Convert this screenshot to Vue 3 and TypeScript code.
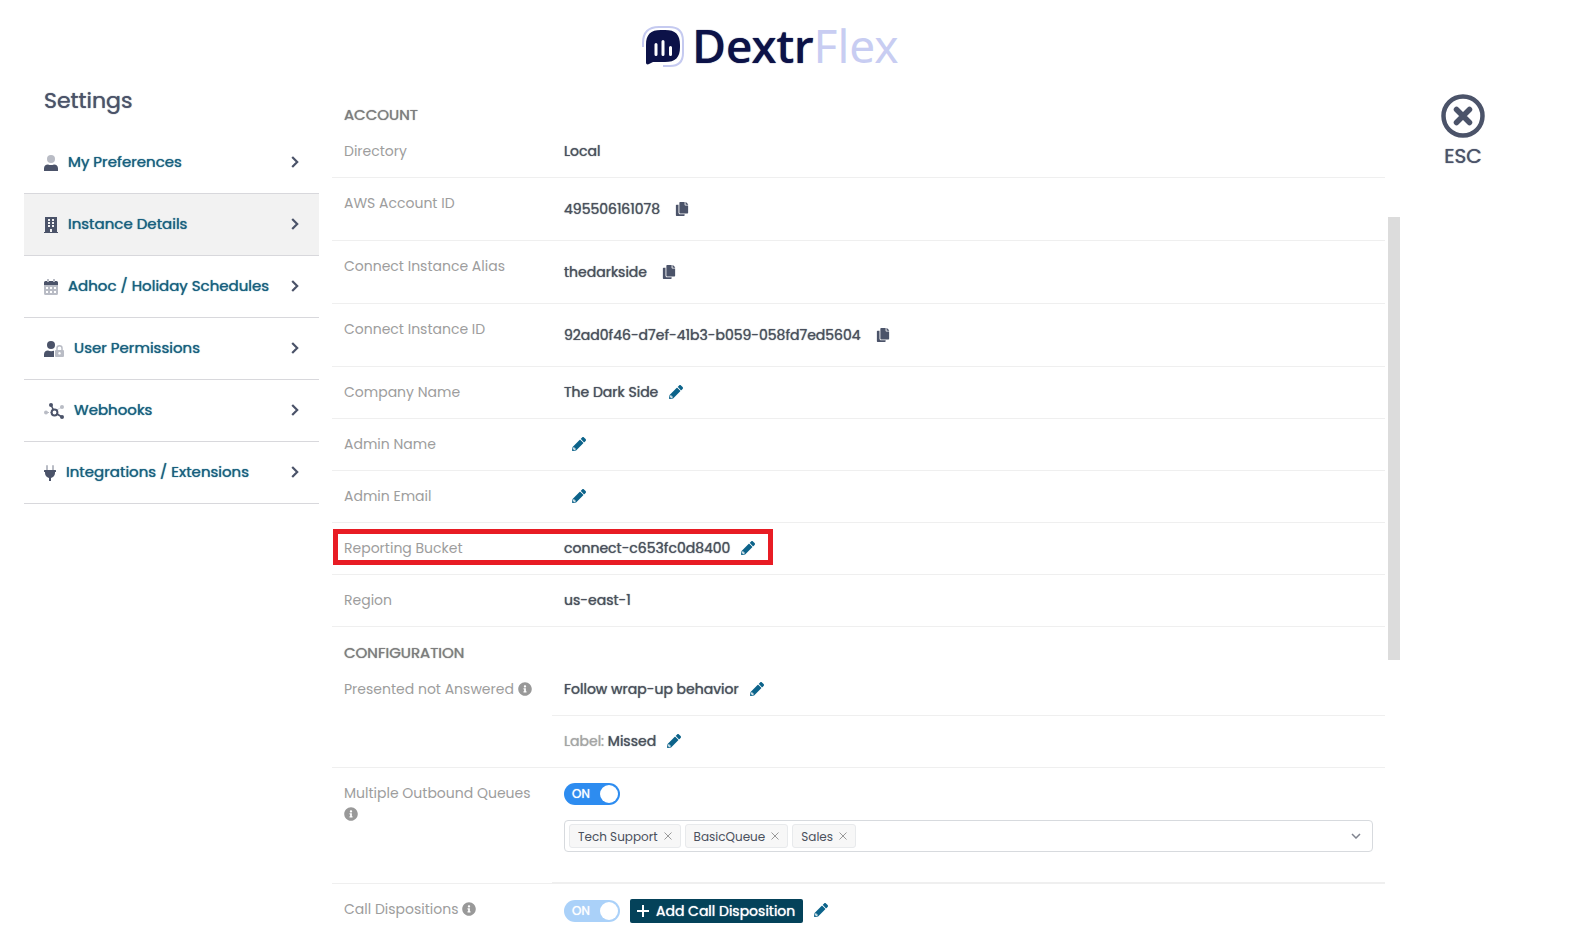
<script setup lang="ts">
import { ref } from 'vue'

type IconName = 'user' | 'building' | 'calendar' | 'lock' | 'hub' | 'plug'
interface NavItem { label: string; icon: IconName; active?: boolean }
interface Detail { label: string; value: string; action?: 'copy' | 'edit'; marked?: boolean }

const nav: NavItem[] = [
  { label: 'My Preferences', icon: 'user' },
  { label: 'Instance Details', icon: 'building', active: true },
  { label: 'Adhoc / Holiday Schedules', icon: 'calendar' },
  { label: 'User Permissions', icon: 'lock' },
  { label: 'Webhooks', icon: 'hub' },
  { label: 'Integrations / Extensions', icon: 'plug' },
]

const account: Detail[] = [
  { label: 'Directory', value: 'Local' },
  { label: 'AWS Account ID', value: '495506161078', action: 'copy' },
  { label: 'Connect Instance Alias', value: 'thedarkside', action: 'copy' },
  { label: 'Connect Instance ID', value: '92ad0f46-d7ef-41b3-b059-058fd7ed5604', action: 'copy' },
  { label: 'Company Name', value: 'The Dark Side', action: 'edit' },
  { label: 'Admin Name', value: '', action: 'edit' },
  { label: 'Admin Email', value: '', action: 'edit' },
  { label: 'Reporting Bucket', value: 'connect-c653fc0d8400', action: 'edit', marked: true },
  { label: 'Region', value: 'us-east-1' },
]

const queues = ref<string[]>(['Tech Support', 'BasicQueue', 'Sales'])
const outbound = ref(true)
const dispositions = ref(true)

function removeQueue(name: string) {
  queues.value = queues.value.filter((q) => q !== name)
}
</script>

<template>
  <div class="page">
    <svg class="defs" aria-hidden="true">
      <symbol id="i-copy" viewBox="0 0 448 512"><path d="M320 448v40c0 13.255-10.745 24-24 24H24c-13.255 0-24-10.745-24-24V120c0-13.255 10.745-24 24-24h72v296c0 30.879 25.121 56 56 56h168zm0-344V0H152c-13.255 0-24 10.745-24 24v368c0 13.255 10.745 24 24 24h272c13.255 0 24-10.745 24-24V128H344c-13.2 0-24-10.8-24-24zm120.971-31.029L375.029 7.029A24 24 0 0 0 358.059 0H352v96h96v-6.059a24 24 0 0 0-7.029-16.97z" /></symbol>
      <symbol id="i-edit" viewBox="0 0 512 512"><path d="M497.9 142.1l-46.1 46.1c-4.7 4.7-12.3 4.7-17 0l-111-111c-4.7-4.7-4.7-12.3 0-17l46.1-46.1c18.7-18.7 49.1-18.7 67.9 0l60.1 60.1c18.8 18.7 18.8 49.1 0 67.9zM284.2 99.8L21.6 362.4.4 483.9c-2.9 16.4 11.4 30.6 27.8 27.8l121.5-21.3 262.6-262.6c4.7-4.7 4.7-12.3 0-17l-111-111c-4.8-4.7-12.4-4.7-17.1 0zM88 424h48v36.3l-64.5 11.3-31.1-31.1L51.7 376H88v48z" /></symbol>
      <symbol id="i-info" viewBox="0 0 512 512"><path d="M256 8C119.043 8 8 119.083 8 256c0 136.997 111.043 248 248 248s248-111.003 248-248C504 119.083 392.957 8 256 8zm0 110c23.196 0 42 18.804 42 42s-18.804 42-42 42-42-18.804-42-42 18.804-42 42-42zm56 254c0 6.627-5.373 12-12 12h-88c-6.627 0-12-5.373-12-12v-24c0-6.627 5.373-12 12-12h12v-64h-12c-6.627 0-12-5.373-12-12v-24c0-6.627 5.373-12 12-12h64c6.627 0 12 5.373 12 12v100h12c6.627 0 12 5.373 12 12v24z" /></symbol>
    </svg>

    <header class="top">
      <svg class="mark" viewBox="0 0 42 42" aria-hidden="true">
        <path d="M1 21V17C1 6 6 1 17 1h10c9 0 14 5 14 14v12c0 9-5 13-13 13h-7" fill="none" stroke="#c5caf0" stroke-width="2" />
        <path d="M4 19C4 8.500 8.500 4 19 4h4c10.500 0 15 4.500 15 15v2c0 10.500-4.500 15-15 15h-12l-4.500 2.300c-1.500.5-2.500-.3-2.500-1.800z" fill="#0c1248" />
        <path d="M14 18.500v10M21 15.500v13M28.500 21.500v7" stroke="#fff" stroke-width="3" stroke-linecap="round" />
      </svg>
      <div class="brand"><span class="brand-a">Dextr</span><span class="brand-b">Flex</span></div>
    </header>

    <div class="body">
      <nav class="side" aria-label="Settings">
        <h1>Settings</h1>
        <a v-for="item in nav" :key="item.label" href="#" :class="['nav-item', { active: item.active }]">
          <svg v-if="item.icon === 'user'" class="nav-icon" viewBox="0 0 14 16"><circle cx="7" cy="4" r="4" fill="#b9bcc5" /><path d="M0 16v-2.500C0 11 1.600 9.500 4 9.500c2 .8 4 .8 6 0 2.400 0 4 1.500 4 4V16z" fill="#4b5369" /></svg>
          <svg v-else-if="item.icon === 'building'" class="nav-icon" viewBox="0 0 14 16"><path fill="#4b5369" fill-rule="evenodd" d="M1 0h12v15h1v1H0v-1h1zM4 2v2h2V2zm4 0v2h2V2zM4 5v2h2V5zm4 0v2h2V5zM4 8v2h2V8zm4 0v2h2V8zM6 12v3h2v-3z" /></svg>
          <svg v-else-if="item.icon === 'calendar'" class="nav-icon" viewBox="0 0 14 16"><path fill="#b9bcc5" d="M3 0h2v3H3zM9 0h2v3H9z" /><path fill="#4b5369" d="M0 6V3.500Q0 2 1.500 2H3v1h2V2h4v1h2V2h1.500Q14 2 14 3.500V6z" /><path fill="#b9bcc5" fill-rule="evenodd" d="M0 6h14v8.500q0 1.500-1.500 1.500h-11Q0 16 0 14.500zM2 8v2h2V8zm4 0v2h2V8zm4 0v2h2V8zM2 12v2h2v-2zm4 0v2h2v-2zm4 0v2h2v-2z" /></svg>
          <svg v-else-if="item.icon === 'lock'" class="nav-icon wide" viewBox="0 0 20 16"><circle cx="7" cy="4" r="4" fill="#4b5369" /><path d="M0 16v-2.500C0 11 1.600 9.500 4 9.500c2 .8 4 .8 6 .2V16z" fill="#4b5369" /><path d="M13 9V7.200a2.500 2.500 0 0 1 5 0V9" fill="none" stroke="#b9bcc5" stroke-width="1.500" /><path fill="#b9bcc5" fill-rule="evenodd" d="M12 9h7q1 0 1 1v5q0 1-1 1h-7q-1 0-1-1v-5q0-1 1-1zm3.500 2a1.300 1.300 0 1 0 .01 0z" /></svg>
          <svg v-else-if="item.icon === 'hub'" class="nav-icon wide" viewBox="0 0 20 16"><path d="M3 9.500h4M13 7l4-2.500" stroke="#b9bcc5" stroke-width="1" stroke-dasharray="2 1" /><circle cx="2" cy="9.500" r="2" fill="#b9bcc5" /><circle cx="18" cy="4" r="2" fill="#b9bcc5" /><path d="M7 2l2.500 5M13 11l5 3" stroke="#4b5369" stroke-width="1.600" /><circle cx="7" cy="2" r="2" fill="#4b5369" /><circle cx="18" cy="14" r="2" fill="#4b5369" /><circle cx="10.500" cy="9.500" r="2.900" fill="none" stroke="#4b5369" stroke-width="2" /></svg>
          <svg v-else class="nav-icon plug" viewBox="0 0 12 16"><path d="M3 1v4M9 1v4" stroke="#b9bcc5" stroke-width="2" stroke-linecap="round" /><path fill="#4b5369" d="M.5 5h11q.5 0 .5.500v1q0 .5-.5.500H11v1c0 2.500-1.700 4.500-4 5v3H5v-3C2.700 12.500 1 10.500 1 8V7H.5Q0 7 0 6.500v-1Q0 5 .5 5z" /></svg>
          <span>{{ item.label }}</span>
          <svg class="chev" viewBox="0 0 8 12"><path d="M1.200 1l5 5-5 5" fill="none" stroke="#4b5369" stroke-width="2.200" /></svg>
        </a>
      </nav>

      <main class="content">
        <section>
          <h2>ACCOUNT</h2>
          <dl>
            <div v-for="d in account" :key="d.label" :class="['row', { marked: d.marked }]">
              <dt>{{ d.label }}</dt>
              <dd class="pad">
                <span v-if="d.value">{{ d.value }}</span>
                <button v-if="d.action === 'copy'" type="button" class="icon-btn copy" :aria-label="'Copy ' + d.label"><svg><use href="#i-copy" /></svg></button>
                <button v-if="d.action === 'edit'" type="button" :class="['icon-btn edit', { alone: !d.value }]" :aria-label="'Edit ' + d.label"><svg><use href="#i-edit" /></svg></button>
              </dd>
            </div>
          </dl>
        </section>

        <section>
          <h2>CONFIGURATION</h2>
          <dl>
            <div class="row">
              <dt>Presented not Answered <svg class="info"><use href="#i-info" /></svg></dt>
              <dd>
                <div class="pad sub">
                  <span>Follow wrap-up behavior</span>
                  <button type="button" class="icon-btn edit" aria-label="Edit behavior"><svg><use href="#i-edit" /></svg></button>
                </div>
                <div class="pad">
                  <span><span class="muted">Label:</span> Missed</span>
                  <button type="button" class="icon-btn edit" aria-label="Edit label"><svg><use href="#i-edit" /></svg></button>
                </div>
              </dd>
            </div>
            <div class="row">
              <dt><label for="outbound">Multiple Outbound Queues</label> <svg class="info"><use href="#i-info" /></svg></dt>
              <dd class="queues">
                <span class="toggle"><input id="outbound" v-model="outbound" type="checkbox" role="switch"><span class="state">ON</span></span>
                <div class="select">
                  <span v-for="q in queues" :key="q" class="tag">{{ q }}
                    <button type="button" :aria-label="'Remove ' + q" @click="removeQueue(q)"><svg viewBox="0 0 8 8"><path d="M.5.500l7 7M7.500.500l-7 7" stroke="#999" stroke-width="1" /></svg></button>
                  </span>
                  <input type="text" aria-label="Outbound queues">
                  <svg class="drop" viewBox="0 0 10 6"><path d="M1 1l4 4 4-4" fill="none" stroke="#80848f" stroke-width="1.500" /></svg>
                </div>
              </dd>
            </div>
            <div class="row last">
              <dt><label for="dispositions">Call Dispositions</label> <svg class="info"><use href="#i-info" /></svg></dt>
              <dd class="pad">
                <span class="toggle off"><input id="dispositions" v-model="dispositions" type="checkbox" role="switch" disabled><span class="state">ON</span></span>
                <button type="button" class="add"><svg viewBox="0 0 12 12"><path d="M6 0v12M0 6h12" stroke="#fff" stroke-width="2" /></svg>Add Call Disposition</button>
                <button type="button" class="icon-btn edit" aria-label="Edit dispositions"><svg><use href="#i-edit" /></svg></button>
              </dd>
            </div>
          </dl>
        </section>
      </main>

      <div class="scroll" aria-hidden="true"><div class="thumb"></div></div>

      <aside>
        <button type="button" class="esc">
          <svg viewBox="0 0 44 44"><circle cx="22" cy="22" r="19.500" fill="none" stroke="#4b5369" stroke-width="4.500" /><path d="M15.500 15.500l13 13M28.500 15.500l-13 13" stroke="#4b5369" stroke-width="5.500" stroke-linecap="round" /></svg>
          <span>ESC</span>
        </button>
      </aside>
    </div>
  </div>
</template>

<style>
body { margin: 0; background: #fff; }
</style>

<style scoped>
.page { font-family: Poppins, Inter, "Liberation Sans", sans-serif; font-size: 14px; line-height: 21px; color: #4a505c; }
.page * { box-sizing: border-box; }
.defs { position: absolute; width: 0; height: 0; }
button { font: inherit; border: 0; background: none; padding: 0; cursor: pointer; }
.top { display: flex; justify-content: center; align-items: center; gap: 8px; height: 89px; padding: 4px 36px 0 0; }
.mark { width: 42px; height: 42px; }
.brand { padding-bottom: 3px; font-family: "Noto Sans", sans-serif; font-size: 46px; line-height: 56px; white-space: nowrap; }
.brand-a { font-weight: 500; color: #0c1248; text-shadow: 0 0 1px currentColor; }
.brand-b { font-weight: 400; color: #c8cdf2; }
.body { display: flex; padding-left: 24px; }
.side { flex: 0 0 295px; margin-right: 13px; }
h1 { margin: 0; height: 43px; padding-left: 20px; font-size: 22px; line-height: 24px; font-weight: 400; color: #4b5369; }
h1, h2, dd, .nav-item, .esc { text-shadow: 0 0 1px currentColor; }
.nav-item { display: flex; align-items: center; height: 62px; padding: 0 20px 2px; border-bottom: 1px solid #d8d8dc; color: #17607f; font-size: 15px; font-weight: 400; text-decoration: none; }
.nav-item.active { background: #f2f2f2; }
.nav-icon { width: 14px; height: 16px; margin: 2px 10px 0 0; }
.nav-icon.wide { width: 20px; }
.nav-icon.plug { width: 12px; }
.chev { width: 8px; height: 12px; margin-left: auto; }
.content { flex: 1; min-width: 0; }
h2 { margin: 0; height: 37px; padding: 15px 12px 0; font-size: 15px; line-height: 21px; font-weight: 400; color: #7d7d7d; }
dl { margin: 0; }
.row { position: relative; display: grid; grid-template-columns: 220px minmax(0, 1fr); border-bottom: 1px solid #efefef; }
.row.last { border-bottom: 0; }
.marked::after { content: ""; position: absolute; box-sizing: border-box; left: 1px; top: 6px; width: 440px; height: 36px; border: 5px solid #e81c24; pointer-events: none; }
dt { padding: 15px 12px; color: #9d9d9d; }
dd { margin: 0; }
.pad { display: flex; align-items: center; padding: 15px 12px; }
.pad > span { min-height: 21px; }
.sub { border-bottom: 1px solid #efefef; }
.muted { color: #a5a5a5; }
.icon-btn { display: flex; align-items: center; }
.icon-btn svg { width: 14px; height: 14px; }
.edit { height: 21px; margin-left: 11px; padding-bottom: 2px; fill: #0c638a; }
.edit.alone { margin-left: 8px; }
.copy { height: 32px; margin-left: 15px; fill: #4b5369; }
.info { width: 14px; height: 14px; fill: #999; vertical-align: -2px; }
.queues { display: flex; flex-direction: column; align-items: flex-start; gap: 15px; padding: 15px 12px 30px; border-bottom: 1px solid #efefef; }
.toggle { position: relative; display: block; width: 56px; height: 22px; }
.toggle input { appearance: none; display: block; width: 56px; height: 22px; margin: 0; border-radius: 11px; background: #2d8cf0; }
.toggle input::after { content: ""; position: absolute; right: 2px; top: 2px; width: 18px; height: 18px; border-radius: 9px; background: #fff; }
.toggle.off input { background: #aad1f9; }
.state { position: absolute; left: 8px; top: 0; font-size: 12px; line-height: 22px; color: #fff; pointer-events: none; }
.select { display: flex; align-items: center; gap: 4px; width: 100%; height: 32px; padding: 0 11px 0 4px; border: 1px solid #d7dade; border-radius: 4px; text-shadow: none; }
.tag { display: flex; align-items: center; gap: 6px; height: 24px; padding: 0 8px; border: 1px solid #e8eaec; border-radius: 3px; background: #f7f7f7; font-size: 12px; white-space: nowrap; }
.tag button { display: flex; }
.tag svg { width: 8px; height: 8px; }
.select input { flex: 1; min-width: 0; border: 0; outline: 0; background: none; font: inherit; }
.drop { width: 10px; height: 6px; }
.add { display: flex; align-items: center; gap: 7px; height: 24px; margin-left: 10px; padding: 0 8px 0 7px; border-radius: 2px; background: #04425a; color: #fff; white-space: nowrap; text-shadow: 0 0 1px currentColor; }
.add svg { width: 12px; height: 12px; }
.scroll { flex: 0 0 12px; margin-left: 3px; padding-top: 128px; }
.thumb { height: 443px; background: #dcdcdc; }
aside { flex: 0 0 177px; padding-right: 51px; }
.esc { display: flex; flex-direction: column; align-items: center; width: 100%; padding-top: 5px; color: #4b5369; font-size: 20px; line-height: 36px; }
.esc svg { width: 44px; height: 44px; }
</style>
